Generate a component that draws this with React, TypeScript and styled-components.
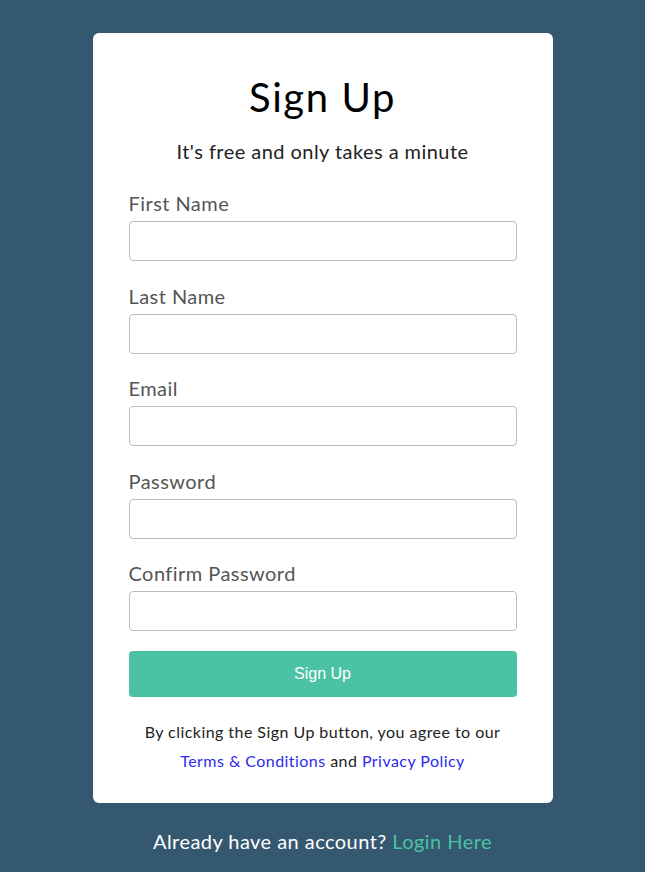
import styled, { createGlobalStyle } from 'styled-components'

const GlobalStyle = createGlobalStyle`
  html, body {
    margin: 0;
    padding: 0;
    background: #34586f;
  }
  body {
    font-family: Lato, "Open Sans", sans-serif;
    letter-spacing: 0.45px;
  }
  * {
    box-sizing: border-box;
  }
`

const fields = ['First Name', 'Last Name', 'Email', 'Password', 'Confirm Password']

export default function App() {
  return (
    <>
      <GlobalStyle />
      <Page>
        <Card>
          <Title>Sign Up</Title>
          <Subtitle>It's free and only takes a minute</Subtitle>
          <Form onSubmit={(e) => e.preventDefault()}>
            {fields.map((f) => (
              <Field key={f}>
                <Label>{f}</Label>
                <Input type={f.includes('Password') ? 'password' : 'text'} />
              </Field>
            ))}
            <Button type="submit">Sign Up</Button>
          </Form>
          <Terms>
            By clicking the Sign Up button, you agree to our
            <br />
            <Link href="#">Terms &amp; Conditions</Link> and <Link href="#">Privacy Policy</Link>
          </Terms>
        </Card>
        <Footer>
          Already have an account? <FooterLink href="#">Login Here</FooterLink>
        </Footer>
      </Page>
    </>
  )
}

const Page = styled.div`
  display: flex;
  flex-direction: column;
  align-items: center;
  padding-top: 33px;
  min-height: 100vh;
`

const Card = styled.div`
  width: 460px;
  background: #fff;
  border-radius: 6px;
  padding: 40px 36px 28px;
`

const Title = styled.h1`
  margin: 0;
  font-size: 40px;
  line-height: 48px;
  font-weight: 400;
  letter-spacing: 1.6px;
  text-align: center;
  color: #000;
`

const Subtitle = styled.p`
  margin: 18px 0 28px;
  font-size: 20px;
  line-height: 24px;
  text-align: center;
  color: #222;
`

const Form = styled.form`
  display: flex;
  flex-direction: column;
`

const Field = styled.div`
  display: flex;
  flex-direction: column;
  gap: 6px;
  margin-bottom: 22.6px;

  &:last-of-type {
    margin-bottom: 20px;
  }
`

const Label = styled.label`
  font-size: 20px;
  line-height: 24px;
  color: #555;
`

const Input = styled.input`
  height: 40px;
  width: 100%;
  border: 1px solid #bbb;
  border-radius: 4px;
  padding: 0 10px;
  font-size: 16px;
  outline: none;
`

const Button = styled.button`
  height: 46px;
  border: none;
  border-radius: 4px;
  background: #4bc2a3;
  color: #fff;
  font-family: "Liberation Sans", Arial, sans-serif;
  font-size: 16px;
  letter-spacing: 0;
`

const Terms = styled.p`
  margin: 20px 0 0;
  text-align: center;
  font-size: 16px;
  line-height: 29px;
  color: #222;
`

const Link = styled.a`
  color: #2b2bf0;
  text-decoration: none;
`

const Footer = styled.p`
  margin: 26px 0 0;
  font-size: 20px;
  line-height: 24px;
  color: #fff;
`

const FooterLink = styled.a`
  color: #4bc2a3;
  text-decoration: none;
`
